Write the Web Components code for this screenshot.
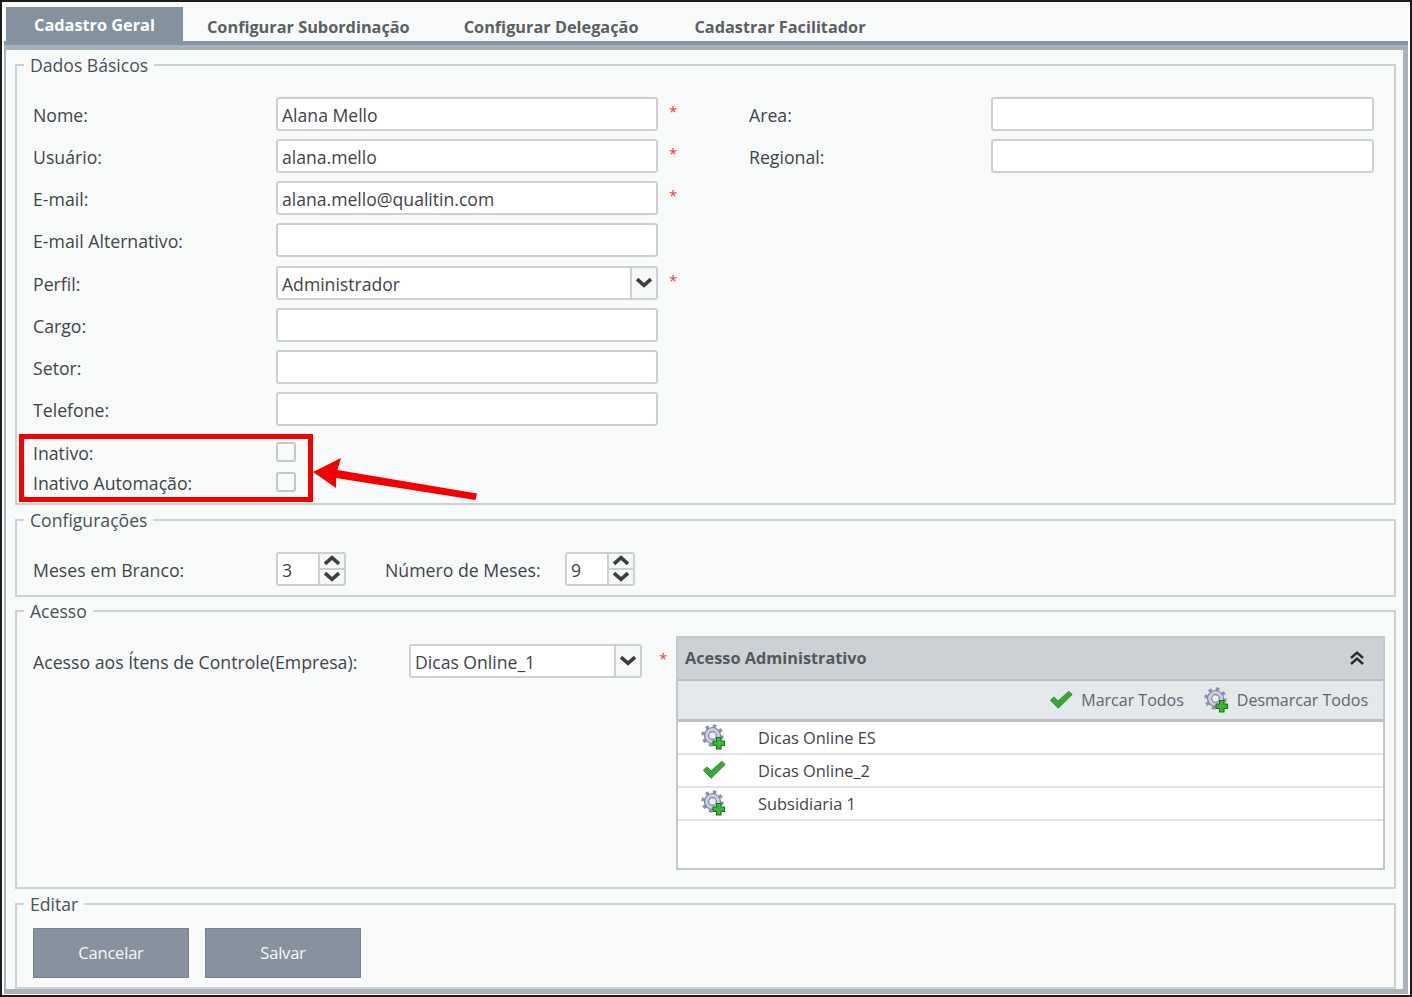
<!DOCTYPE html>
<html lang="pt"><head><meta charset="utf-8"><title>Cadastro</title>
<style>
html,body{margin:0;padding:0;background:#fff}
body{font:16.5px "Open Sans","Noto Sans",sans-serif;color:#444a50}
</style></head><body>
<x-app>
  <x-tabs slot="tabs">
    <x-tab active>Cadastro Geral</x-tab>
    <x-tab style="--l:24px;--r:27px">Configurar Subordinação</x-tab>
    <x-tab style="--l:27px;--r:28px">Configurar Delegação</x-tab>
    <x-tab style="--l:28px;--r:28px">Cadastrar Facilitador</x-tab>
  </x-tabs>

  <x-fieldset legend="Dados Básicos" style="--pt:21px;--pb:6px">
    <x-form>
      <x-label>Nome:</x-label><x-input>Alana Mello</x-input><x-star></x-star><x-label>Area:</x-label><x-input></x-input>
      <x-label>Usuário:</x-label><x-input>alana.mello</x-input><x-star></x-star><x-label>Regional:</x-label><x-input></x-input>
      <x-label>E-mail:</x-label><x-input>alana.mello@qualitin.com</x-input><x-star></x-star><i></i><i></i>
      <x-label>E-mail Alternativo:</x-label><x-input></x-input><i></i><i></i><i></i>
      <x-label>Perfil:</x-label><x-select>Administrador</x-select><x-star></x-star><i></i><i></i>
      <x-label>Cargo:</x-label><x-input></x-input><i></i><i></i><i></i>
      <x-label>Setor:</x-label><x-input></x-input><i></i><i></i><i></i>
      <x-label>Telefone:</x-label><x-input></x-input><i></i><i></i><i></i>
    </x-form>
    <x-checks>
      <x-label>Inativo:</x-label><x-check></x-check>
      <x-label>Inativo Automação:</x-label><x-check></x-check>
    </x-checks>
  </x-fieldset>

  <x-fieldset legend="Configurações" style="--pt:21px;--pb:9px;--gap:4px">
    <x-config>
      <x-label>Meses em Branco:</x-label><x-spinner>3</x-spinner>
      <x-label>Número de Meses:</x-label><x-spinner>9</x-spinner>
    </x-config>
  </x-fieldset>

  <x-fieldset legend="Acesso" style="--pt:14px;--pb:17px;--gap:3px">
    <x-access>
      <x-label>Acesso aos Ítens de Controle(Empresa):</x-label>
      <x-select style="--sw:233px">Dicas Online_1</x-select>
      <x-star></x-star>
      <x-panel title="Acesso Administrativo">
        <x-row icon="gear">Dicas Online ES</x-row>
        <x-row icon="check">Dicas Online_2</x-row>
        <x-row icon="gear">Subsidiaria 1</x-row>
      </x-panel>
    </x-access>
  </x-fieldset>

  <x-fieldset legend="Editar" style="--pt:13px;--pb:9px;--gap:4px">
    <x-actions><x-btn>Cancelar</x-btn><x-btn>Salvar</x-btn></x-actions>
  </x-fieldset>
  <x-callout slot="over"></x-callout>
</x-app>
<script>
const GEAR=`<svg width="26" height="26" viewBox="0 0 26 26" aria-hidden="true"><circle cx="11.500" cy="11.500" r="9" fill="none" stroke="#8c91ae" stroke-width="4.400" stroke-dasharray="3.300 3.770"/><circle cx="11.500" cy="11.500" r="8" fill="#c9cce2" stroke="#7d829f" stroke-width="1.200"/><circle cx="11.500" cy="11.500" r="3.800" fill="#eef0f8" stroke="#7d829f" stroke-width="1.200"/><path d="M15.500 13.500h4.500v3.500h3.500v4.500h-3.500v3.500h-4.500v-3.500h-3.500v-4.500h3.500z" fill="#38b836" stroke="#1a6f20" stroke-width="1.100" stroke-linejoin="round"/></svg>`;
const CHECK=`<svg width="26" height="22" viewBox="0 0 26 22" aria-hidden="true"><path d="M2.400 11.200 5.900 7.900 10 12 20.800 2.400 24.200 5.400 10.200 19.200z" fill="#39a935" stroke="#2c8f2c" stroke-width="1" stroke-linejoin="round"/></svg>`;
const DOWN=`<svg width="18" height="11" viewBox="0 0 18 11" aria-hidden="true"><path d="M2 2.200 9 8.400 16 2.200" fill="none" stroke="#3d3d3d" stroke-width="3.600"/></svg>`;
const UP=`<svg width="18" height="11" viewBox="0 0 18 11" aria-hidden="true"><path d="M2 8.800 9 2.600 16 8.800" fill="none" stroke="#3d3d3d" stroke-width="3.600"/></svg>`;
function def(name,css,html){
  customElements.define(name,class extends HTMLElement{
    constructor(){super();const s=this.attachShadow({mode:"open"});
      s.innerHTML=`<style>${css}</style>${typeof html==="function"?html(this):html}`;}
  });
}
def("x-app",`:host{display:flex;flex-direction:column;box-sizing:border-box;width:1412px;height:997px;border:2px solid #1c1c1c;background:#fff;overflow:hidden;position:relative}
 .top{background:#f8fafa;margin:0 2px 0 2px;padding-top:5px;height:34px;flex:none}
 .bar{height:9px;margin:0 2px;flex:none;background:linear-gradient(#8695a3 0 4px,#a7b1ba 4px)}
 .main{flex:none;margin:0 2px;height:944px;box-sizing:border-box;background:#f8fafa;border:solid #a9b2ba;border-width:0 5px 5px 2px;padding:4px 7px 0 9px}`,
 `<div class="top"><slot name="tabs"></slot></div><div class="bar"></div><div class="main"><slot></slot></div><slot name="over"></slot>`);
def("x-tabs",`:host{display:flex;height:34px;padding-left:2px}`,`<slot></slot>`);
def("x-tab",`:host{display:flex;align-items:center;height:34px;box-sizing:border-box;font-weight:700;font-size:16.300px;color:#5b5f63;padding:5px var(--r,27px) 0 var(--l,27px);white-space:nowrap}
 :host([active]){background:#84919f;color:#fff;width:177px;justify-content:center;padding:2px 0 0 0}`,`<slot></slot>`);
def("x-fieldset",`:host{display:block;margin-top:var(--gap,0)}
 fieldset{margin:0;border:2px solid #ccd1d5;padding:var(--pt) 15px var(--pb) 16px;min-width:0}
 legend{padding:0 6px;margin-left:-9px;line-height:22px;font-size:17.600px;color:#4a5056}`,
 t=>`<fieldset><legend>${t.getAttribute("legend")}</legend><slot></slot></fieldset>`);
def("x-form",`:host{display:grid;grid-template-columns:243px 382px 91px 242px 383px;grid-auto-rows:34px;row-gap:8.150px}
 ::slotted(i){display:block}`,`<slot></slot>`);
def("x-label",`:host{display:flex;align-items:center;box-sizing:border-box;padding-top:2px;white-space:nowrap;font-size:17.700px;color:#3f4449}`,`<slot></slot>`);
def("x-input",`:host{display:block;box-sizing:border-box;height:34px;border:2px solid #ccd0d4;border-radius:3px;background:#fff;padding:0 4px;line-height:33px;font-size:17.600px;color:#3f4347;white-space:nowrap;overflow:hidden}`,`<slot></slot>`);
def("x-star",`:host{display:block;color:#ef3b3b;font-size:15px;line-height:14px;padding:7px 0 0 11px}`,`*`);
def("x-select",`:host{display:flex;box-sizing:border-box;width:var(--sw,382px);height:34px;border:2px solid #ccd0d4;border-radius:3px;background:#f6f7f7;font-size:17.600px;color:#3f4347}
 .v{flex:1;background:#fff;padding:0 4px;line-height:33px;border-right:2px solid #ccd0d4;white-space:nowrap}
 .b{width:24px;display:flex;align-items:center;justify-content:center}`,`<div class="v"><slot></slot></div><div class="b">${DOWN}</div>`);
def("x-checks",`:host{display:grid;grid-template-columns:243px 20px;grid-auto-rows:30px;margin-top:11px;height:60px;align-items:center}`,`<slot></slot>`);
def("x-check",`:host{display:block;box-sizing:border-box;width:20px;height:20px;border:2px solid #c4c8cc;border-radius:3px;background:#f8f9f9}`,``);
def("x-config",`:host{display:flex;align-items:center;height:34px}
 ::slotted(x-label){width:243px}
 ::slotted(x-label:nth-of-type(2)){width:180px;margin-left:39px}`,`<slot></slot>`);
def("x-spinner",`:host{display:flex;box-sizing:border-box;width:70px;height:34px;flex:none;border:2px solid #ccd0d4;border-radius:3px;background:#f6f7f7;font-size:17.600px;color:#3f4347}
 .v{flex:1;background:#fff;padding:0 4px;line-height:33px;border-right:2px solid #ccd0d4}
 .b{width:24px;display:flex;flex-direction:column}
 .b div{flex:1;display:flex;align-items:center;justify-content:center}
 .b div:first-child{border-bottom:2px solid #ccd0d4}`,`<div class="v"><slot></slot></div><div class="b"><div>${UP}</div><div>${DOWN}</div></div>`);
def("x-access",`:host{display:flex;align-items:flex-start}
 ::slotted(x-label){width:376px;height:34px;margin-top:8px;flex:none}
 ::slotted(x-select){margin-top:8px;flex:none}
 ::slotted(x-star){width:34px;box-sizing:border-box;margin-top:8px;padding-left:17px;flex:none}
 ::slotted(x-panel){flex:none}`,`<slot></slot>`);
def("x-panel",`:host{display:block;box-sizing:border-box;width:709px;height:234px;border:2px solid #c3c8cd;background:#fff}
 .h{height:41px;background:#ccd1d6;display:flex;align-items:center;justify-content:space-between;padding:0 17px 0 7px;font-weight:700;font-size:16.300px;color:#53585d;border-bottom:2px solid #b5bcc3}
 .t{height:41px;background:#e4e8ea;display:flex;align-items:center;justify-content:flex-end;padding:0 15px 0 0;color:#5c6670;border-bottom:3px solid #b9c0c6;box-sizing:border-box;font-size:16px}
 .t span{display:flex;align-items:center;gap:7px;margin-left:20px}`,
 t=>`<div class="h"><span>${t.getAttribute("title")}</span><svg width="18" height="18" viewBox="0 0 18 18" aria-hidden="true"><path d="M3 9 9 3.600 15 9M3 15 9 9.600 15 15" fill="none" stroke="#2b2b2b" stroke-width="2.400"/></svg></div>
 <div class="t"><span>${CHECK}Marcar Todos</span><span>${GEAR}Desmarcar Todos</span></div><slot></slot>`);
def("x-row",`:host{display:flex;align-items:center;box-sizing:border-box;height:33px;border-bottom:2px solid #e0e3e6;font-size:16.400px;color:#3f4448}
 .i{width:80px;padding-left:23px;box-sizing:border-box;display:flex;align-items:center;flex:none}`,
 t=>`<div class="i">${t.getAttribute("icon")==="gear"?GEAR:CHECK}</div><slot></slot>`);
def("x-actions",`:host{display:flex;gap:16px}`,`<slot></slot>`);
def("x-btn",`:host{display:flex;align-items:center;justify-content:center;box-sizing:border-box;width:156px;height:50px;background:#87929e;border:1px solid #75818d;color:#f6f7f8;font-size:16.500px;letter-spacing:-.2px}`,`<slot></slot>`);
def("x-callout",`:host{position:absolute;left:-2px;top:-2px;width:1412px;height:997px;pointer-events:none}
 svg{display:block}`,`<svg width="1412" height="997" aria-hidden="true"><rect x="21.500" y="436.500" width="289" height="63" fill="none" stroke="#f40000" stroke-width="5"/><path d="M313 472 341 458 337.500 470 477 493.500 475.500 500 336 478 336 488z" fill="#f40000"/></svg>`);
</script>
</body></html>
